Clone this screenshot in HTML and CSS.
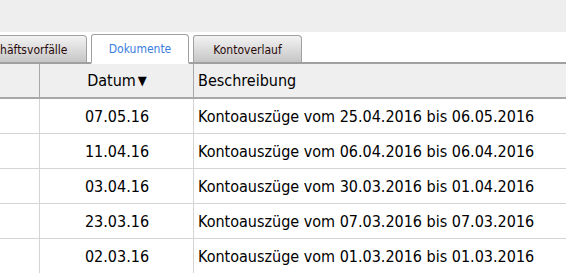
FILE: index.html
```html
<!DOCTYPE html>
<html>
<head>
<meta charset="utf-8">
<link rel="stylesheet" href="styles.css">
</head>
<body>
<div class="top"></div>
<div class="tabbar">
  <div class="tab first">Geschäftsvorfälle</div>
  <div class="tab active">Dokumente</div>
  <div class="tab">Kontoverlauf</div>
</div>
<div class="grid">
  <div class="row head">
    <div class="cell"></div>
    <div class="cell date">Datum<span class="arrow">▼</span></div>
    <div class="cell desc">Beschreibung</div>
  </div>
  <div class="row">
    <div class="cell"></div>
    <div class="cell date">07.05.16</div>
    <div class="cell desc">Kontoauszüge vom 25.04.2016 bis 06.05.2016</div>
  </div>
  <div class="row">
    <div class="cell"></div>
    <div class="cell date">11.04.16</div>
    <div class="cell desc">Kontoauszüge vom 06.04.2016 bis 06.04.2016</div>
  </div>
  <div class="row">
    <div class="cell"></div>
    <div class="cell date">03.04.16</div>
    <div class="cell desc">Kontoauszüge vom 30.03.2016 bis 01.04.2016</div>
  </div>
  <div class="row">
    <div class="cell"></div>
    <div class="cell date">23.03.16</div>
    <div class="cell desc">Kontoauszüge vom 07.03.2016 bis 07.03.2016</div>
  </div>
  <div class="row">
    <div class="cell"></div>
    <div class="cell date">02.03.16</div>
    <div class="cell desc">Kontoauszüge vom 01.03.2016 bis 01.03.2016</div>
  </div>
</div>
</body>
</html>
```
FILE: styles.css
```css
html, body {
  margin: 0;
  padding: 0;
  background: #ffffff;
  overflow: hidden;
}
body {
  width: 566px;
  height: 273px;
  font-family: "DejaVu Sans Condensed", "DejaVu Sans", sans-serif;
  color: #000;
}
.top {
  height: 32px;
  background: #eeeeee;
}
.tabbar {
  height: 32px;
  display: flex;
  align-items: flex-end;
  gap: 4px;
  background: #fff;
  border-bottom: 2px solid #a0a0a0;
  box-sizing: border-box;
  overflow: visible;
}
.tab {
  height: 29px;
  margin-bottom: -2px;
  box-sizing: border-box;
  border: 1px solid #a0a0a0;
  border-bottom: 2px solid #a0a0a0;
  border-radius: 3px 4px 0 0;
  background: linear-gradient(#f3f3f3, #c6c6c6);
  font-size: 12px;
  padding-top: 1px;
  color: #2a0a0a;
  display: flex;
  align-items: center;
  justify-content: center;
  width: 109px;
}
.tab.first {
  margin-left: -46px;
  width: 133px;
}
.tab.active {
  width: 98px;
  background: #fff;
  color: #3a7ee0;
  border-bottom-color: #fff;
  height: 30px;
}
.row {
  display: grid;
  grid-template-columns: 39px 154px 1fr;
  height: 35px;
  border-bottom: 1px solid #d4d4d4;
  box-sizing: border-box;
  font-size: 16px;
}
.row.head {
  background: #efefef;
  height: 35px;
  border-bottom: 2px solid #a8a8a8;
}
.cell {
  display: flex;
  align-items: center;
  border-left: 1px solid #d4d4d4;
  white-space: nowrap;
}
.cell:first-child {
  border-left: none;
}
.head .cell {
  border-left-color: #a8a8a8;
}
.date {
  justify-content: center;
  padding-left: 1px;
}
.desc {
  padding-left: 4px;
}
.arrow {
  font-size: 13px;
  margin-left: 2px;
}
```
